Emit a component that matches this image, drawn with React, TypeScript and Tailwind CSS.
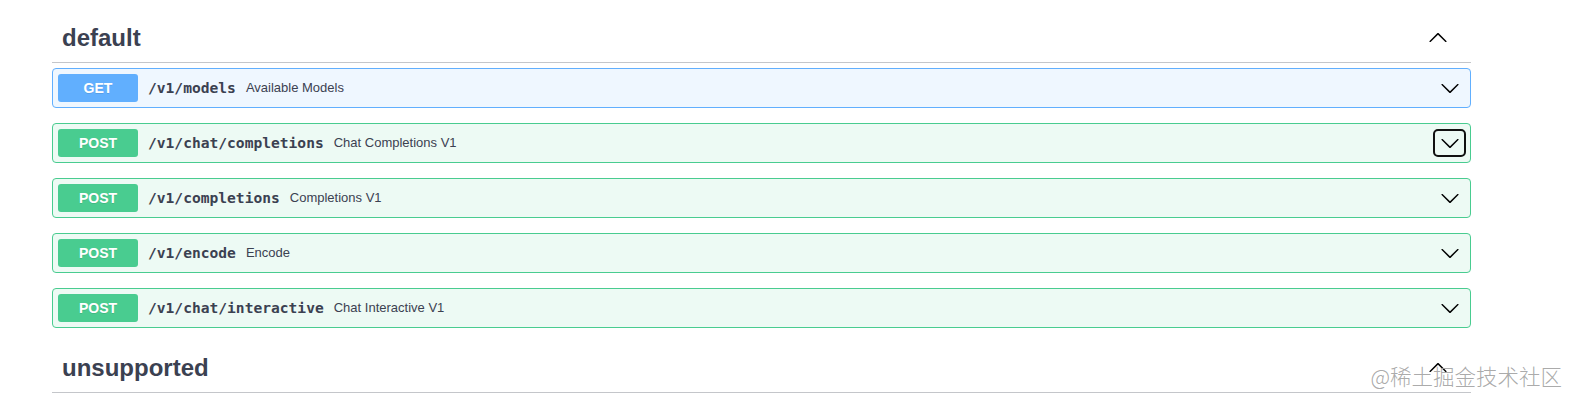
const ops = [
  { method: "GET", path: "/v1/models", summary: "Available Models" },
  { method: "POST", path: "/v1/chat/completions", summary: "Chat Completions V1", focused: true },
  { method: "POST", path: "/v1/completions", summary: "Completions V1" },
  { method: "POST", path: "/v1/encode", summary: "Encode" },
  { method: "POST", path: "/v1/chat/interactive", summary: "Chat Interactive V1" },
];

function Arrow({ up = false }: { up?: boolean }) {
  return (
    <svg
      width="20"
      height="20"
      viewBox="0 0 20 20"
      className={up ? "rotate-180" : ""}
      aria-hidden="true"
    >
      <path
        fill="#000"
        d="M17.418 6.109c.272-.268.709-.268.979 0s.271.701 0 .969l-7.908 7.83c-.27.268-.707.268-.979 0l-7.908-7.83c-.27-.268-.27-.701 0-.969.271-.268.709-.268.979 0L10 13.25l7.418-7.141z"
      />
    </svg>
  );
}

function TagHeader({ name }: { name: string }) {
  return (
    <h4 className="flex items-center justify-between pt-[11px] pb-[10px] pl-[10px] pr-[23px] border-b border-[#3b4151]/30 mb-[5px] text-[24px] leading-[28px] font-bold text-[#3b4151] font-['Liberation_Sans',Arial,sans-serif]">
      <span>{name}</span>
      <Arrow up />
    </h4>
  );
}

export default function App() {
  return (
    <div className="relative h-[393px] overflow-hidden bg-white">
      <div className="ml-[52px] w-[1419px] pt-[13px]">
        <TagHeader name="default" />
        {ops.map((op) => {
          const get = op.method === "GET";
          return (
            <div
              key={op.path}
              className={`flex items-center mb-[15px] py-[5px] pl-[5px] pr-[4px] rounded-[4px] border ${
                get ? "bg-[#eff7ff] border-[#61affe]" : "bg-[#edfaf4] border-[#49cc90]"
              }`}
            >
              <span
                className={`w-[80px] py-[6px] rounded-[3px] text-center text-[14px] leading-[16px] font-bold text-white font-['Liberation_Sans',Arial,sans-serif] [text-shadow:0_1px_0_rgba(0,0,0,0.1)] ${
                  get ? "bg-[#61affe]" : "bg-[#49cc90]"
                }`}
              >
                {op.method}
              </span>
              <span className="px-[10px] text-[14.6px] font-bold text-[#3b4151] font-['DejaVu_Sans_Mono',monospace]">
                {op.path}
              </span>
              <span className="flex-1 text-[13px] text-[#3b4151] font-['Liberation_Sans',Arial,sans-serif]">
                {op.summary}
              </span>
              <span
                className={`flex items-center justify-center w-[33px] h-[28px] rounded-[5px] border-2 ${
                  op.focused ? "border-[#111]" : "border-transparent"
                }`}
              >
                <Arrow />
              </span>
            </div>
          );
        })}
        <TagHeader name="unsupported" />
      </div>
      <div className="absolute right-[8px] bottom-[4px] text-[21.5px] leading-[26px] text-[#a0a0a0]/90 font-['Noto_Sans_CJK_SC',sans-serif] font-light">
        @稀土掘金技术社区
      </div>
    </div>
  );
}
